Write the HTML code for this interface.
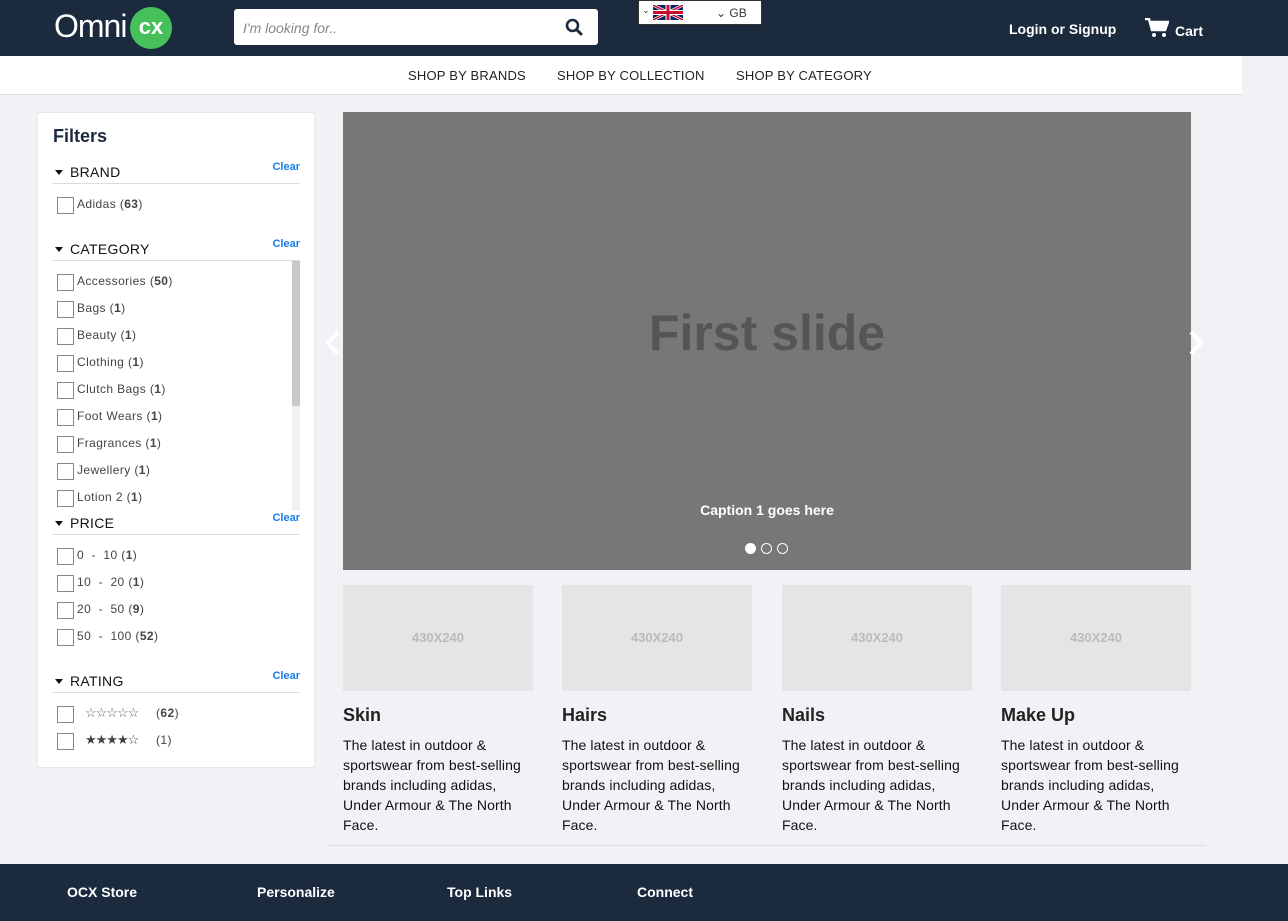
<!DOCTYPE html>
<html><head><meta charset="utf-8"><style>
*{box-sizing:border-box;margin:0;padding:0}
body{width:1288px;height:921px;overflow:hidden;background:#f1f2f6;font-family:"Liberation Sans",sans-serif;color:#222;position:relative}
.a{position:absolute}
.hdr{left:0;top:0;width:1288px;height:56px;background:#1b2a3d}
.nav{left:0;top:56px;width:1242px;height:39px;background:#fff;border-bottom:1px solid #ddd}
.nav span{position:absolute;top:12px;font-size:13px;color:#222;letter-spacing:.2px}
.side{left:37px;top:112px;width:278px;height:656px;background:#fff;border:1px solid #e6e6ea}
.sec{position:absolute;left:14px;width:248px;border-bottom:1px solid #ddd;height:22px}
.sec b{font-weight:normal;font-size:14px;position:absolute;left:18px;top:2px;color:#111;letter-spacing:.3px}
.sec i{position:absolute;left:3px;top:8px;border-left:4px solid transparent;border-right:4px solid transparent;border-top:5px solid #111}
.sec u{text-decoration:none;position:absolute;right:0;top:-1px;color:#1a7ee6;font-size:11px;font-weight:bold}
.row{position:absolute;left:19px;font-size:12px;color:#444;height:16px;letter-spacing:.4px}
.row:before{content:"";position:absolute;left:0;top:0;width:15px;height:15px;border:1px solid #888;background:#fff}
.row span{position:absolute;left:20px;top:0;white-space:nowrap}
.st{font-size:13px;letter-spacing:-1px!important}
.card{position:absolute;top:585px;width:190px}
.card .img{height:106px;background:#e5e5e5;color:#bbb;font-size:13px;font-weight:bold;text-align:center;line-height:106px}
.card h3{font-size:18px;margin-top:14px;color:#222}
.card p{font-size:14px;line-height:20px;margin-top:9px;color:#111;letter-spacing:.1px}
.ft{left:0;top:864px;width:1288px;height:57px;background:#1b2a3d}
.ft span{position:absolute;top:20px;color:#fff;font-weight:bold;font-size:14px}
</style></head><body>
<div class="a hdr">
 <div class="a" style="left:54px;top:8px;color:#fff;font-size:32px;font-weight:300;letter-spacing:-1px">Omni</div>
 <div class="a" style="left:130px;top:7px;width:42px;height:42px;border-radius:50%;background:#46c15a;color:#fff;font-weight:bold;font-size:22px;text-align:center;line-height:40px">cx</div>
 <div class="a" style="left:234px;top:9px;width:364px;height:36px;background:#fff;border-radius:3px">
  <span class="a" style="left:9px;top:11px;font-size:14px;color:#888;font-style:italic">I'm looking for..</span>
  <svg class="a" style="left:331px;top:9px" width="18" height="18" viewBox="0 0 18 18"><circle cx="7.5" cy="7.5" r="5.5" fill="none" stroke="#1b2a3d" stroke-width="2.6"/><path d="M11.5 11.5L16 16" stroke="#1b2a3d" stroke-width="3" stroke-linecap="round"/></svg>
 </div>
 <div class="a" style="left:638px;top:0;width:124px;height:25px;background:#fff;border:1px solid #333;font-size:12px;color:#333">
  <span class="a" style="left:3px;top:4px;font-size:9px">⌄</span>
  <svg class="a" style="left:14px;top:4px" width="30" height="15" viewBox="0 0 60 30"><rect width="60" height="30" fill="#012169"/><path d="M0 0L60 30M60 0L0 30" stroke="#fff" stroke-width="6"/><path d="M0 0L60 30M60 0L0 30" stroke="#c8102e" stroke-width="3"/><path d="M30 0V30M0 15H60" stroke="#fff" stroke-width="10"/><path d="M30 0V30M0 15H60" stroke="#c8102e" stroke-width="6"/></svg>
  <span class="a" style="left:77px;top:5px">⌄ GB</span>
 </div>
 <div class="a" style="left:1009px;top:21px;color:#fff;font-size:14px;font-weight:bold">Login or Signup</div>
 <svg class="a" style="left:1145px;top:18px" width="24" height="20" viewBox="0 0 24 20"><path d="M0 1h4l3 11h13l3-8H6" fill="none" stroke="#fff" stroke-width="2.4"/><rect x="6" y="4" width="16" height="7" fill="#fff"/><circle cx="9" cy="17" r="2" fill="#fff"/><circle cx="19" cy="17" r="2" fill="#fff"/></svg>
 <div class="a" style="left:1175px;top:23px;color:#fff;font-size:14px;font-weight:bold">Cart</div>
</div>
<div class="a nav"><span style="left:408px">SHOP BY BRANDS</span><span style="left:557px">SHOP BY COLLECTION</span><span style="left:736px">SHOP BY CATEGORY</span></div>
<div class="a side">
 <div class="a" style="left:15px;top:13px;font-size:18px;font-weight:bold;color:#1b2a3d">Filters</div>
 <div class="sec" style="top:49px"><i></i><b>BRAND</b><u>Clear</u></div>
 <div class="row" style="top:84px"><span>Adidas (<b>63</b>)</span></div>
 <div class="sec" style="top:126px"><i></i><b>CATEGORY</b><u>Clear</u></div>
 <div class="a" style="left:254px;top:148px;width:8px;height:250px;background:#f1f1f1"><div style="height:145px;background:#c8c8c8"></div></div>
 <div class="row" style="top:161px"><span>Accessories (<b>50</b>)</span></div>
 <div class="row" style="top:188px"><span>Bags (<b>1</b>)</span></div>
 <div class="row" style="top:215px"><span>Beauty (<b>1</b>)</span></div>
 <div class="row" style="top:242px"><span>Clothing (<b>1</b>)</span></div>
 <div class="row" style="top:269px"><span>Clutch Bags (<b>1</b>)</span></div>
 <div class="row" style="top:296px"><span>Foot Wears (<b>1</b>)</span></div>
 <div class="row" style="top:323px"><span>Fragrances (<b>1</b>)</span></div>
 <div class="row" style="top:350px"><span>Jewellery (<b>1</b>)</span></div>
 <div class="row" style="top:377px"><span>Lotion 2 (<b>1</b>)</span></div>
 <div class="sec" style="top:400px"><i></i><b>PRICE</b><u>Clear</u></div>
 <div class="row" style="top:435px"><span>0 &nbsp;- &nbsp;10 (<b>1</b>)</span></div>
 <div class="row" style="top:462px"><span>10 &nbsp;- &nbsp;20 (<b>1</b>)</span></div>
 <div class="row" style="top:489px"><span>20 &nbsp;- &nbsp;50 (<b>9</b>)</span></div>
 <div class="row" style="top:516px"><span>50 &nbsp;- &nbsp;100 (<b>52</b>)</span></div>
 <div class="sec" style="top:558px"><i></i><b>RATING</b><u>Clear</u></div>
 <div class="row" style="top:593px"><span class="st" style="left:28px;color:#666;top:-1px">☆☆☆☆☆</span><span style="left:99px">(<b>62</b>)</span></div>
 <div class="row" style="top:620px"><span class="st" style="left:28px;color:#444;top:-1px">★★★★☆</span><span style="left:99px">(1)</span></div>
</div>
<div class="a" style="left:343px;top:112px;width:848px;height:458px;background:#777">
 <div class="a" style="left:0;width:848px;top:192px;text-align:center;font-size:50px;font-weight:bold;color:#555">First slide</div>
 <div class="a" style="left:0;width:848px;top:390px;text-align:center;font-size:14px;font-weight:bold;color:#fff">Caption 1 goes here</div>
 <div class="a" style="left:402px;top:431px;width:11px;height:11px;border-radius:50%;background:#fff"></div>
 <div class="a" style="left:418px;top:431px;width:11px;height:11px;border-radius:50%;border:1.5px solid #fff"></div>
 <div class="a" style="left:434px;top:431px;width:11px;height:11px;border-radius:50%;border:1.5px solid #fff"></div>
</div>
<svg class="a" style="left:325px;top:330px" width="16" height="26"><path d="M13 2L3 13l10 11" fill="none" stroke="#fff" stroke-width="4"/></svg>
<svg class="a" style="left:1188px;top:330px" width="16" height="26"><path d="M3 2l10 11L3 24" fill="none" stroke="#fff" stroke-width="4"/></svg>
<div class="card" style="left:343px"><div class="img">430X240</div><h3>Skin</h3><p>The latest in outdoor &amp; sportswear from best-selling brands including adidas, Under Armour &amp; The North Face.</p></div>
<div class="card" style="left:562px"><div class="img">430X240</div><h3>Hairs</h3><p>The latest in outdoor &amp; sportswear from best-selling brands including adidas, Under Armour &amp; The North Face.</p></div>
<div class="card" style="left:782px"><div class="img">430X240</div><h3>Nails</h3><p>The latest in outdoor &amp; sportswear from best-selling brands including adidas, Under Armour &amp; The North Face.</p></div>
<div class="card" style="left:1001px"><div class="img">430X240</div><h3>Make Up</h3><p>The latest in outdoor &amp; sportswear from best-selling brands including adidas, Under Armour &amp; The North Face.</p></div>
<div class="a" style="left:328px;top:845px;width:878px;height:1px;background:#ddd"></div>
<div class="a ft"><span style="left:67px">OCX Store</span><span style="left:257px">Personalize</span><span style="left:447px">Top Links</span><span style="left:637px">Connect</span></div>
</body></html>
